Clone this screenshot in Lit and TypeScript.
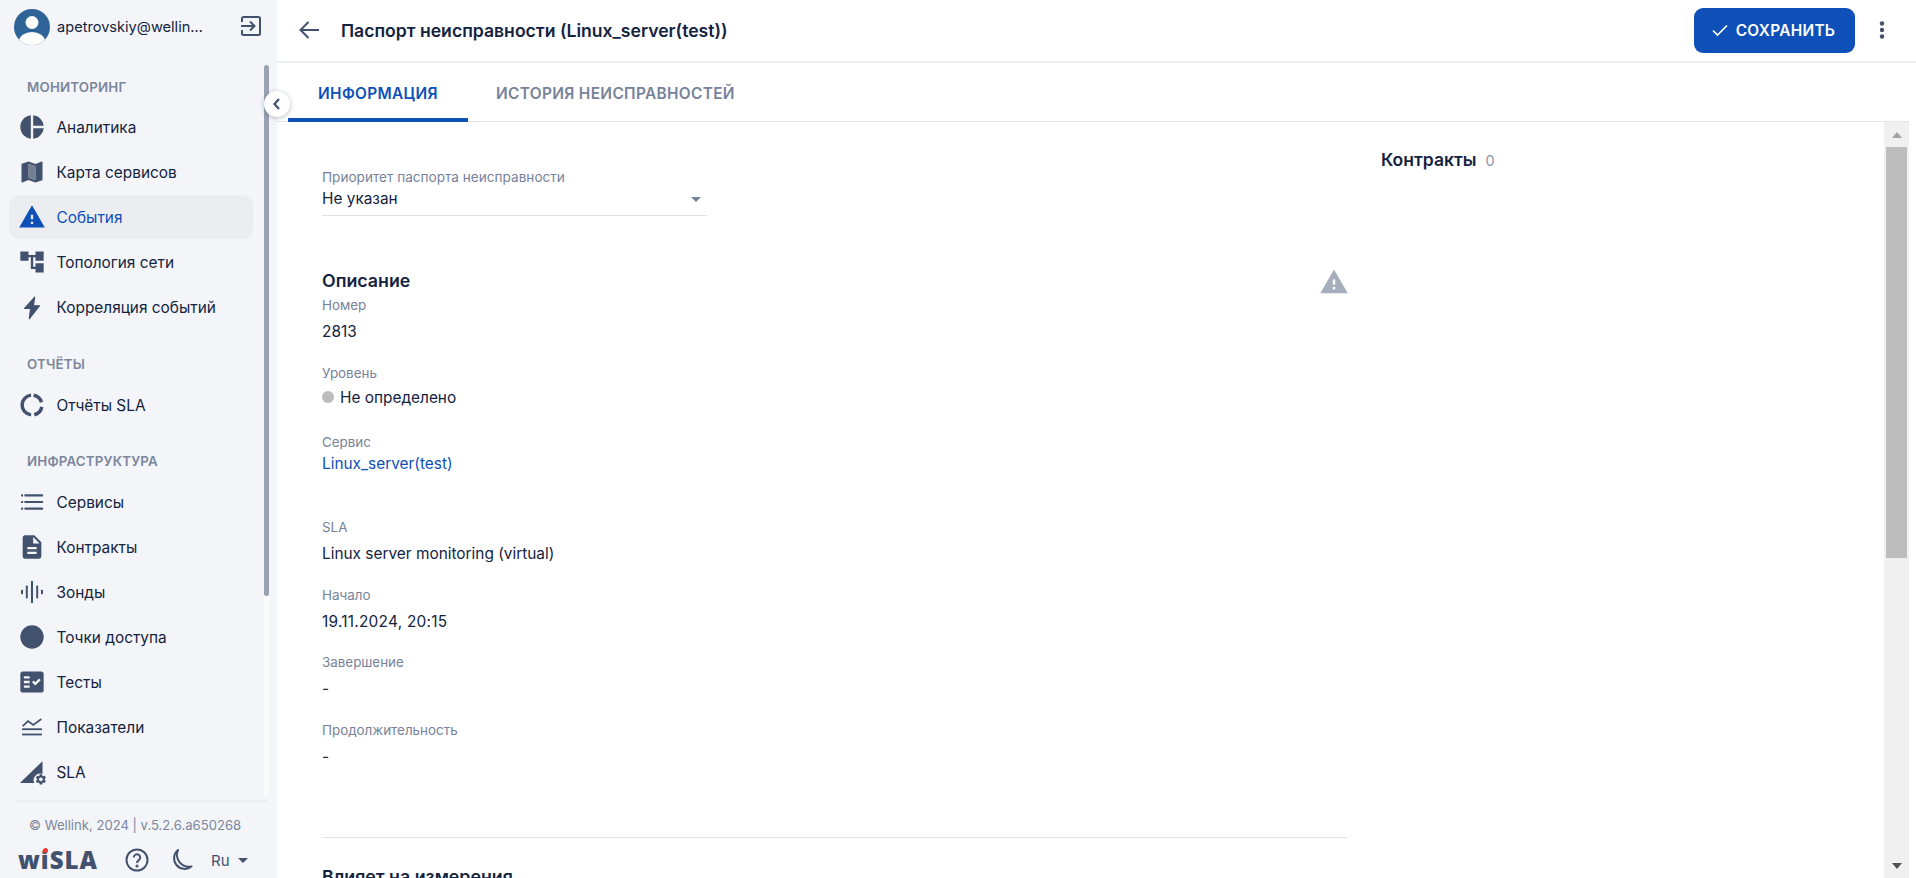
import { LitElement, html, css, svg } from "lit";
import { customElement } from "lit/decorators.js";

const P: Record<string, any> = {
  pie: svg`<path d="M11 2v20c-5.07-.5-9-4.79-9-10s3.93-9.5 9-10zm2.03 0v8.99H22c-.47-4.74-4.24-8.52-8.97-8.99zm0 11.01V22c4.74-.47 8.5-4.25 8.97-8.99h-8.97z"/>`,
  map: svg`<path d="M20.5 3l-.16.03L15 5.1 9 3 3.36 4.9c-.21.07-.36.25-.36.48V20.5c0 .28.22.5.5.5l.16-.03L9 18.9l6 2.1 5.64-1.9c.21-.07.36-.25.36-.48V3.5c0-.28-.22-.5-.5-.5zM15 19l-6-2.11V5l6 2.11V19z"/><path opacity=".72" d="M15 19l-6-2.11V5l6 2.11V19z"/>`,
  warn: svg`<path d="M1 21h22L12 2 1 21zm12-3h-2v-2h2v2zm0-4h-2v-4h2v4z"/>`,
  tree: svg`<path d="M22 11V3h-7v3H9V3H2v8h7V8h2v10h4v3h7v-8h-7v3h-2V8h2v3z"/>`,
  bolt: svg`<path d="M14.3 3.5L5.5 13.3h5.3L9.7 22l8.8-11.1h-5.3z" stroke="currentColor" stroke-width="1" stroke-linejoin="round"/>`,
  ring: svg`<g fill="none" stroke="currentColor" stroke-width="3"><path d="M11.2 20.46A8.5 8.5 0 0 1 11.2 3.54"/><path d="M13.4 3.6A8.5 8.5 0 0 1 20.1 9.6"/><path d="M20.4 13.6A8.5 8.5 0 0 1 14 20.3"/></g>`,
  list: svg`<rect x="5.5" y="5.4" width="16" height="1.8" rx=".4"/><rect x="5.5" y="11.1" width="16" height="1.8" rx=".4"/><rect x="5.5" y="16.8" width="16" height="1.8" rx=".4"/><rect x="2.6" y="5.4" width="1.8" height="1.8" rx=".5"/><rect x="2.6" y="11.1" width="1.8" height="1.8" rx=".5"/><rect x="2.6" y="16.8" width="1.8" height="1.8" rx=".5"/>`,
  doc: svg`<path d="M14 2H6c-1.1 0-1.99.9-1.99 2L4 20c0 1.1.89 2 1.99 2H18c1.1 0 2-.9 2-2V8l-6-6zm2 16H8v-2h8v2zm0-4H8v-2h8v2zm-3-5V3.5L18.5 9H13z"/>`,
  probe: svg`<rect x="2.6" y="10" width="1.7" height="4" rx=".5"/><rect x="6.7" y="6.5" width="1.7" height="11" rx=".5"/><rect x="11.1" y="2.5" width="1.8" height="19" rx=".6"/><rect x="15.6" y="6.5" width="1.7" height="11" rx=".5"/><rect x="19.7" y="10" width="1.7" height="4" rx=".5"/>`,
  dot: svg`<circle cx="12" cy="12" r="10"/>`,
  tests: svg`<path d="M20 3H4c-1.1 0-2 .9-2 2v14c0 1.1.9 2 2 2h16c1.1 0 2-.9 2-2V5c0-1.1-.9-2-2-2zM10 17H5v-2h5v2zm0-4H5v-2h5v2zm0-4H5V7h5v2zm4.82 6L12 12.16l1.41-1.41 1.41 1.42L17.99 9l1.42 1.42L14.82 15z"/>`,
  metrics: svg`<path d="M4 11.2l4.6-4.3 4.5 3.3L20 5.2" fill="none" stroke="currentColor" stroke-width="1.5"/><rect x="3.5" y="13.1" width="17" height="1.6"/><rect x="3.5" y="17.6" width="17" height="1.6"/>`,
  sla: svg`<path d="M1.6 21.4L21 2.7v11a5.6 5.6 0 0 0-7 7.7z"/><g transform="translate(14.1 12.8) scale(.46)"><path d="M19.14 12.94c.04-.3.06-.61.06-.94 0-.32-.02-.64-.07-.94l2.03-1.58c.18-.14.23-.41.12-.61l-1.92-3.32c-.12-.22-.37-.29-.59-.22l-2.39.96c-.5-.38-1.03-.7-1.62-.94l-.36-2.54c-.04-.24-.24-.41-.48-.41h-3.84c-.24 0-.43.17-.47.41l-.36 2.54c-.59.24-1.13.57-1.62.94l-2.39-.96c-.22-.08-.47 0-.59.22L2.74 8.87c-.12.21-.08.47.12.61l2.03 1.58c-.05.3-.09.63-.09.94s.02.64.07.94l-2.03 1.58c-.18.14-.23.41-.12.61l1.92 3.32c.12.22.37.29.59.22l2.39-.96c.5.38 1.03.7 1.62.94l.36 2.54c.05.24.24.41.48.41h3.84c.24 0 .44-.17.47-.41l.36-2.54c.59-.24 1.13-.56 1.62-.94l2.39.96c.22.08.47 0 .59-.22l1.92-3.32c.12-.22.07-.47-.12-.61l-2.01-1.58zM12 15.6c-1.98 0-3.6-1.62-3.6-3.6s1.62-3.6 3.6-3.6 3.6 1.62 3.6 3.6-1.62 3.6-3.6 3.6z"/></g>`,
};

const icon = (name: string) => html`<svg class="ic" viewBox="0 0 24 24" fill="currentColor">${P[name]}</svg>`;

const item = (name: string, label: string, active = false) => html`
  <div class="item ${active ? "active" : ""}">${icon(name)}<span>${label}</span></div>`;

@customElement("app-root")
export class AppRoot extends LitElement {
  static styles = css`
    :host { display: block; height: 100vh; overflow: hidden; font-family: Inter, "Noto Sans", sans-serif; color: #14233f; background: #fff; }
    * { box-sizing: border-box; }
    .app { display: flex; height: 100%; position: relative; }
    .side { width: 277px; flex: none; background: #f3f5f8; display: flex; flex-direction: column; height: 100%; }
    .user { height: 52px; flex: none; display: flex; align-items: center; padding: 0 14px; gap: 7px; }
    .user .name { font-size: 14.6px; width: 160px; margin-top: 2px; white-space: nowrap; overflow: hidden; text-overflow: ellipsis; color: #14233f; }
    .avatar { width: 36px; height: 36px; flex: none; display: block; margin-top: 2px; }
    .logout { width: 24px; height: 24px; margin-left: 27px; flex: none; color: #42526e; }
    .navwrap { flex: none; height: 743px; display: flex; }
    .nav { width: 264px; padding-left: 9px; padding-right: 11px; }
    .track { width: 5px; height: 730px; margin-top: 13px; background: #fbfbfc; border-radius: 3px; }
    .thumb { height: 531px; background: #98a2b3; border-radius: 3px; }
    .sec { height: 53px; padding-left: 18px; padding-top: 26px; font-size: 13.3px; line-height: 16px; font-weight: 600; color: #7b869c; letter-spacing: .2px; }
    .sec.first { padding-top: 27px; }
    .sec.inf { height: 52px; padding-top: 25px; }
    .item { height: 44px; margin-bottom: 1px; display: flex; align-items: center; padding-left: 8.5px; border-radius: 10px; font-size: 15.4px; color: #14233f; }
    .item span { margin-left: 11px; }
    .item .ic { width: 28px; height: 28px; color: #42526e; flex: none; }
    .item.active { background: #ebedf1; }
    .item.active, .item.active .ic { color: #0e50b8; }
    .foot { border-top: 2px solid #ecedf1; margin: 5px 9px 0 16px; flex: none; }
    .copy { font-size: 13.1px; line-height: 16px; color: #7b869c; padding: 15px 0 0 13px; white-space: nowrap; }
    .tools { display: flex; align-items: center; margin: 12px 0 0 2px; height: 30px; color: #42526e; }
    .logo { font-family: "Open Sans", Inter, sans-serif; font-weight: 800; font-size: 24px; letter-spacing: 1px; width: 92px; color: #42526e; position: relative; line-height: 30px; }
    .logo i { position: absolute; left: 25px; top: 3px; width: 5px; height: 5px; border-radius: 50%; background: #e8392f; }
    .tools svg { display: block; flex: none; }
    .moon { margin-left: 20px; }
    .lang { font-size: 15px; margin-left: 18px; color: #42526e; }
    .caret { margin-left: 8px; width: 0; height: 0; border: 5.5px solid transparent; border-top: 5.5px solid #42526e; border-bottom: 0; }
    .collapse { position: absolute; left: 264px; top: 91px; width: 26px; height: 26px; border-radius: 50%; background: #fff; box-shadow: 0 1px 5px rgba(20,35,63,.3); display: flex; align-items: center; justify-content: center; color: #42526e; z-index: 2; }
    .main { flex: 1; min-width: 0; display: flex; flex-direction: column; height: 100%; }
    .head { height: 63px; flex: none; border-bottom: 2px solid #ecedf2; display: flex; align-items: center; padding-left: 18px; padding-bottom: 1px; }
    .back { width: 28px; height: 28px; color: #42526e; flex: none; }
    .title { margin-left: 18px; font-size: 17.6px; font-weight: 600; flex: 1; white-space: nowrap; }
    .save { width: 161px; height: 45px; background: #0e50b8; border-radius: 9px; color: #fff; display: flex; align-items: center; justify-content: center; gap: 7px; font-weight: 600; font-size: 15.4px; letter-spacing: .3px; flex: none; padding-right: 3px; }
    .more { width: 54px; margin-right: 7px; flex: none; display: flex; justify-content: center; color: #42526e; }
    .tabs { height: 59px; flex: none; margin-right: 7px; border-bottom: 1px solid #e3e5ea; display: flex; padding-left: 11px; }
    .tab { height: 59px; padding: 1px 29px 0 28px; display: flex; align-items: center; font-size: 15.4px; font-weight: 600; letter-spacing: .35px; color: #76829a; white-space: nowrap; }
    .tab.on { color: #0e50b8; border-bottom: 4px solid #0e50b8; width: 180px; justify-content: center; padding: 5px 0 0; }
    .body { flex: 1; min-height: 0; display: flex; margin-right: 7px; }
    .content { flex: 1; min-width: 0; display: flex; padding-left: 45px; overflow: hidden; }
    .left { width: 1025px; flex: none; }
    .right { margin-left: 34px; padding-top: 28px; display: flex; align-items: baseline; font-size: 17.5px; font-weight: 600; line-height: 20px; white-space: nowrap; height: 60px; }
    .right small { margin-left: 9px; font-size: 14.5px; color: #8b95a8; font-weight: 400; }
    .select { width: 385px; height: 49px; margin-top: 45px; border-bottom: 1px solid #dfe1e6; display: flex; flex-direction: column; }
    .select .lab { font-size: 13.6px; }
    .lab { font-size: 13.4px; line-height: 20px; color: #76829a; white-space: nowrap; }
    .val { font-size: 15.4px; line-height: 20px; color: #14233f; }
    .selval { display: flex; align-items: center; justify-content: space-between; margin-top: 2px; padding-right: 6px; }
    .tri { width: 0; height: 0; border: 5.5px solid transparent; border-top: 5.5px solid #76829a; border-bottom: 0; }
    .h2 { font-size: 17.8px; line-height: 24px; font-weight: 600; display: flex; justify-content: space-between; align-items: center; margin-top: 53px; height: 24px; }
    .h2 svg { width: 30px; height: 30px; color: #a5aeba; margin-right: -2px; display: block; margin-top: 2px; }
    .f { height: 67.6px; }
    .f .val { margin-top: 7px; }
    .f.num { margin-top: 2px; height: 68px; }
    .f.lvl { height: 69px; }
    .f.lvl .val { margin-top: 5px; display: flex; align-items: center; gap: 6px; }
    .f.lvl .val i { width: 12px; height: 12px; border-radius: 50%; background: #bcbcbc; margin-top: -3px; }
    .f.srv { height: 85px; }
    .f.srv .val { margin-top: 2px; color: #0e50b8; }
    .wide { letter-spacing: .25px; }
    hr { border: 0; border-top: 1px solid #dfe1e6; margin: 50px 0 0; }
    .h2b { font-size: 17.8px; line-height: 24px; font-weight: 600; margin-top: 27px; white-space: nowrap; }
    .sb { width: 25px; flex: none; background: #f0f0f0; display: flex; flex-direction: column; align-items: center; padding: 0 2px; }
    .sb .up, .sb .dn { height: 25px; flex: none; display: flex; align-items: center; justify-content: center; width: 100%; }
    .sb .up::before { content: ""; border: 5.5px solid transparent; border-bottom: 6px solid #a3a3a3; border-top: 0; }
    .sb .dn::before { content: ""; border: 5.5px solid transparent; border-top: 6px solid #505050; border-bottom: 0; }
    .sb .th { height: 411px; width: 100%; background: #bdbdbd; }
    .sb .sp { flex: 1; }
  `;

  render() {
    return html`
      <div class="app">
        <aside class="side">
          <div class="user">
            <svg class="avatar" viewBox="0 0 36 36">
              <defs><clipPath id="c"><circle cx="18" cy="18" r="18"/></clipPath></defs>
              <circle cx="18" cy="18" r="18" fill="#2f6499"/>
              <g clip-path="url(#c)" fill="#fff"><circle cx="18" cy="13.5" r="6.5"/><ellipse cx="18" cy="32" rx="13" ry="9"/></g>
            </svg>
            <span class="name">apetrovskiy@wellink.ru</span>
            <svg class="logout" viewBox="0 0 24 24" fill="none" stroke="currentColor" stroke-width="2">
              <path d="M3 8V4.5A1.5 1.5 0 0 1 4.5 3h15A1.5 1.5 0 0 1 21 4.5v15a1.5 1.5 0 0 1-1.5 1.5h-15A1.5 1.5 0 0 1 3 19.5V16"/>
              <path d="M2 12h13M11 7.5l4.5 4.5-4.5 4.5"/>
            </svg>
          </div>
          <div class="navwrap">
            <nav class="nav">
              <div class="sec first">МОНИТОРИНГ</div>
              ${item("pie", "Аналитика")}
              ${item("map", "Карта сервисов")}
              ${item("warn", "События", true)}
              ${item("tree", "Топология сети")}
              ${item("bolt", "Корреляция событий")}
              <div class="sec">ОТЧЁТЫ</div>
              ${item("ring", "Отчёты SLA")}
              <div class="sec inf">ИНФРАСТРУКТУРА</div>
              ${item("list", "Сервисы")}
              ${item("doc", "Контракты")}
              ${item("probe", "Зонды")}
              ${item("dot", "Точки доступа")}
              ${item("tests", "Тесты")}
              ${item("metrics", "Показатели")}
              ${item("sla", "SLA")}
            </nav>
            <div class="track"><div class="thumb"></div></div>
          </div>
          <div class="foot">
            <div class="copy">© Wellink, 2024 | v.5.2.6.a650268</div>
            <div class="tools">
              <div class="logo">wiSLA<i></i></div>
              <svg width="24" height="24" viewBox="0 0 24 24" fill="none" stroke="currentColor" stroke-width="2" style="margin-left:15px">
                <circle cx="12" cy="12" r="10.5"/>
                <path d="M8.8 9.5a3.2 3.2 0 1 1 5 2.6c-1.2.8-1.8 1.4-1.8 2.8"/>
                <circle cx="12" cy="18" r=".6" fill="currentColor"/>
              </svg>
              <svg class="moon" width="24" height="24" viewBox="0 0 24 24" fill="none" stroke="currentColor" stroke-width="2">
                <path d="M9 2A10.3 10.3 0 1 0 22.5 18.5 12 12 0 0 1 9 2z" stroke-linejoin="round"/>
              </svg>
              <span class="lang">Ru</span>
              <div class="caret"></div>
            </div>
          </div>
        </aside>
        <div class="collapse">
          <svg width="16" height="16" viewBox="0 0 16 16" fill="none" stroke="currentColor" stroke-width="2.2"><path d="M10 3L5.5 8 10 13"/></svg>
        </div>
        <main class="main">
          <header class="head">
            <svg class="back" viewBox="0 0 28 28" fill="none" stroke="currentColor" stroke-width="2"><path d="M24 14H6M13.5 6L5.5 14l8 8"/></svg>
            <div class="title">Паспорт неисправности (Linux_server(test))</div>
            <div class="save">
              <svg width="18" height="18" viewBox="0 0 18 18" fill="none" stroke="#fff" stroke-width="1.7"><path d="M2 9.5l4.5 4.5L16 4.5"/></svg>
              СОХРАНИТЬ
            </div>
            <div class="more">
              <svg width="6" height="18" viewBox="0 0 6 18" fill="currentColor"><circle cx="3" cy="2.5" r="2.2"/><circle cx="3" cy="9" r="2.2"/><circle cx="3" cy="15.5" r="2.2"/></svg>
            </div>
          </header>
          <div class="tabs">
            <div class="tab on">ИНФОРМАЦИЯ</div>
            <div class="tab">ИСТОРИЯ НЕИСПРАВНОСТЕЙ</div>
          </div>
          <div class="body">
            <div class="content">
              <div class="left">
                <div class="select">
                  <div class="lab">Приоритет паспорта неисправности</div>
                  <div class="val selval"><span>Не указан</span><span class="tri"></span></div>
                </div>
                <div class="h2"><span>Описание</span><svg viewBox="0 0 24 24" fill="currentColor">${P.warn}</svg></div>
                <div class="f num"><div class="lab">Номер</div><div class="val">2813</div></div>
                <div class="f lvl"><div class="lab">Уровень</div><div class="val"><i></i>Не определено</div></div>
                <div class="f srv"><div class="lab">Сервис</div><div class="val">Linux_server(test)</div></div>
                <div class="f"><div class="lab">SLA</div><div class="val">Linux server monitoring (virtual)</div></div>
                <div class="f"><div class="lab">Начало</div><div class="val wide">19.11.2024, 20:15</div></div>
                <div class="f"><div class="lab">Завершение</div><div class="val">-</div></div>
                <div class="f"><div class="lab">Продолжительность</div><div class="val">-</div></div>
                <hr />
                <div class="h2b">Влияет на измерения</div>
              </div>
              <div class="right">Контракты<small>0</small></div>
            </div>
            <div class="sb">
              <div class="up"></div>
              <div class="th"></div>
              <div class="sp"></div>
              <div class="dn"></div>
            </div>
          </div>
        </main>
      </div>
    `;
  }
}
